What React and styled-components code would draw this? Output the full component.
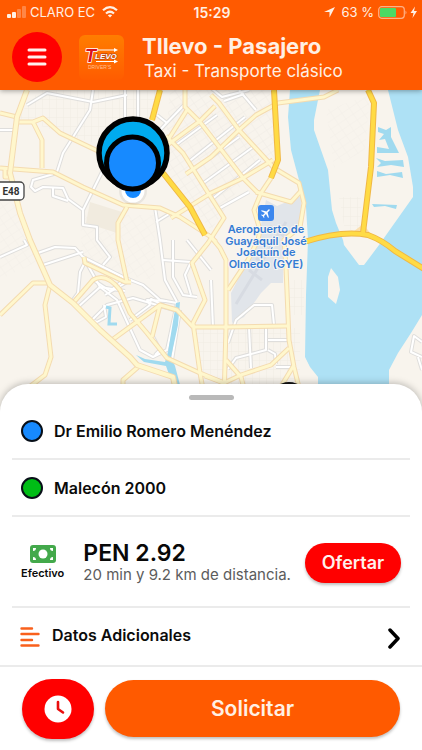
import React from 'react';
import styled, { createGlobalStyle } from 'styled-components';

const GlobalStyle = createGlobalStyle`
  * {
    box-sizing: border-box;
  }
  body {
    margin: 0;
    background: #fff;
    font-family: Inter, "Liberation Sans", sans-serif;
  }
  button {
    font-family: inherit;
    border: none;
    padding: 0;
    cursor: pointer;
  }
`;

const Page = styled.div`
  display: flex;
  flex-direction: column;
  min-height: 100vh;
`;
const Header = styled.header`
  position: relative;
  z-index: 1;
  height: 90px;
  background: #ff5a00;
  color: #fff0e4;
  box-shadow: 0 1px 5px rgba(0, 0, 0, 0.35);
`;
const StatusBar = styled.div`
  display: grid;
  grid-template-columns: 1fr auto 1fr;
  align-items: center;
  height: 24px;
  padding: 0 5px 0 7px;
  font-size: 13px;
`;
const StatusGroup = styled.div`
  display: flex;
  align-items: center;
  justify-content: ${props => (props.$end ? 'flex-end' : 'flex-start')};
  gap: 4px;
  white-space: nowrap;
`;
const Clock = styled.time`
  font-size: 14px;
  font-weight: 600;
`;
const TitleBar = styled.div`
  display: flex;
  align-items: center;
  height: 66px;
  padding: 0 12px;
`;
const MenuButton = styled.button`
  display: flex;
  align-items: center;
  justify-content: center;
  width: 50px;
  height: 50px;
  border-radius: 50%;
  background: #ff0000;
`;
const Logo = styled.svg`
  margin: 0 18px 0 17px;
`;
const Titles = styled.div`
  padding-top: 2px;
`;
const Title = styled.h1`
  margin: 0;
  font-size: 22px;
  line-height: 26px;
  font-weight: 700;
`;
const Subtitle = styled.p`
  margin: 0 0 0 2px;
  font-size: 17px;
  line-height: 24px;
`;
const MapArea = styled.main`
  position: relative;
  flex: 1;
  min-height: 240px;
  margin-bottom: -26px;
  background: #f8f4ed;
`;
const MapDrawing = styled.svg`
  position: absolute;
  width: 100%;
  height: 100%;
`;
const Sheet = styled.section`
  position: relative;
  background: #fff;
  border-radius: 28px 28px 0 0;
  box-shadow: 0 -1px 7px rgba(0, 0, 0, 0.25);
`;
const Handle = styled.div`
  width: 45px;
  height: 5px;
  margin: 0 auto;
  border-radius: 3px;
  background: #b9b9b9;
`;
const SheetTop = styled.div`
  height: 19px;
  padding-top: 11px;
`;
const Rows = styled.div`
  padding: 0 12px;
`;
const Row = styled.button`
  display: flex;
  align-items: center;
  width: 100%;
  height: 57px;
  padding: 0 9px;
  background: none;
  border-bottom: 2px solid #ebebeb;
  color: #0b0b0b;
  font-size: 16px;
  font-weight: 600;
  text-align: left;
`;
const Dot = styled.span`
  width: 22px;
  height: 22px;
  margin-right: 11px;
  border: 2px solid #080f18;
  border-radius: 50%;
  background: ${props => props.$color};
`;
const FareRow = styled.div`
  display: flex;
  align-items: center;
  height: 91px;
  padding: 2px 9px 0;
  border-bottom: 2px solid #ebebeb;
`;
const PaymentButton = styled.button`
  display: flex;
  flex-direction: column;
  align-items: center;
  gap: 3px;
  background: none;
  color: #0b0b0b;
  font-size: 11px;
  line-height: 14px;
  font-weight: 600;
`;
const Fare = styled.div`
  flex: 1;
  padding-left: 19px;
  white-space: nowrap;
`;
const Price = styled.div`
  font-size: 23px;
  line-height: 24px;
  font-weight: 600;
  color: #080808;
`;
const Distance = styled.div`
  font-size: 15px;
  line-height: 20px;
  color: #5c5c5c;
`;
const OfferButton = styled.button`
  width: 96px;
  height: 40px;
  border-radius: 20px;
  background: #ff0000;
  color: #fff0ec;
  font-size: 18px;
  font-weight: 600;
  box-shadow: 0 2px 3px rgba(0, 0, 0, 0.25);
`;
const ExtraRow = styled(Row)`
  border-bottom: none;
  padding: 0 8px;
`;
const RowLabel = styled.span`
  flex: 1;
  padding: 0 0 3px 12px;
`;
const Footer = styled.footer`
  position: relative;
  display: flex;
  align-items: center;
  gap: 11px;
  height: 85px;
  padding: 0 22px;
  border-top: 2px solid #ebebeb;
  background: #fff;
`;
const ScheduleButton = styled.button`
  display: flex;
  align-items: center;
  justify-content: center;
  width: 72px;
  height: 60px;
  border-radius: 30px;
  background: #ff0000;
  box-shadow: 0 2px 3px rgba(0, 0, 0, 0.25);
`;
const RequestButton = styled.button`
  flex: 1;
  height: 57px;
  border-radius: 29px;
  background: #ff5a00;
  color: #fff0e4;
  font-size: 21px;
  font-weight: 600;
  box-shadow: 0 2px 3px rgba(0, 0, 0, 0.25);
`;

const avenues = [
  'M27 0L17 27L10 83L20 123L30 150L50 195L73 213L100 240L130 267L137 275L173 287L178 310',
];
const roads = [
  'M0 23L17 27', 'M17 32H33L43 28L60 43L100 62', 'M33 32L42 50V78',
  'M0 78L53 82L83 97L123 115L160 118L180 127L211 147L216 152',
  'M127 117L118 133V150L127 192', 'M5 78L5 87H12',
  'M185 0V17L200 32L243 88L258 103', 'M166 46L183 63L200 90L224 128L208 153L192 173L205 210L193 233L200 283L205 310',
  'M187 20L168 50', 'M215 16L200 31L166 56', 'M211 5L219 13L239 40L274 78L299 93L304 113L300 137L284 150L286 177L289 250L294 277L302 310',
  'M239 40L256 25L278 13L324 7L338 0', 'M239 40L211 67L186 84', 'M171 128L211 103L243 88L273 70',
  'M271 88L261 103L254 120L260 140L258 150L248 170L228 200', 'M256 102L291 112L301 101',
  'M211 147L220 158L226 170V237L224 310', 'M193 237H226L287 236',
  'M224 293L241 285L271 275L289 258', 'M205 286L224 293', 'M226 270L241 287L247 310', 'M294 275L277 303',
  'M0 225L33 193H50', 'M50 195L45 215L51 267L45 285L28 298',
  'M73 213L93 190Q106 182 120 200L130 223L147 243L167 268L200 283L224 293',
  'M84 167L85 173L125 192H131', 'M112 250L160 215L152 247',
  'M160 215L177 220L193 237', 'M123 310V290L138 277',
];
const streets = [
  'M93 0L90 20L63 63L57 82', 'M27 15L47 3L93 12L127 5', 'M0 40H15', 'M125 0V30', 'M138 0V30',
  'M57 83L33 90L31 97L35 101L43 97L63 98L68 109L83 120V135L97 137V150L110 167L103 175',
  'M53 98V106L68 111', 'M103 80L83 120', 'M155 117L160 150L165 190L177 212',
  'M156 132L169 124', 'M184 15L160 40', 'M157 25L167 33', 'M176 55L217 25', 'M187 73L245 27',
  'M192 81L239 47', 'M202 94L253 57', 'M211 110L260 70', 'M220 118L249 102', 'M239 0L256 20', 'M211 -2L222 7L249 0', 'M224 11L244 4',
  'M38 163L55 157L75 158L83 167L123 187L143 195L160 210L177 213', 'M43 175L83 162', 'M0 167L27 155L24 150',
  'M85 172L80 182L78 203L73 210', 'M85 170L100 197L117 210L140 260L153 267L167 260L177 213',
  'M92 230L107 215L133 208L150 213L174 220', 'M78 217L100 197L125 201', 'M92 230L97 232L106 227L104 215', 'M105 205L127 192',
  'M92 189L110 201L124 190', 'M130 230L150 215L147 210L167 211', 'M150 213L151 209L165 216', 'M151 243L160 260L155 265',
  'M173 150V187L183 205L197 207', 'M163 170L191 172L185 185L191 205', 'M187 150L211 180', 'M180 220L172 270',
  'M228 253L236 230L254 215H272L274 235', 'M249 238L251 278', 'M266 238V260L236 268L228 279',
  'M268 250H288', 'M268 260L275 264L276 274', 'M276 277H294', 'M211 190L213 238',
  'M422 252L414 246L411 262L422 267', 'M418 267L422 280',
];
const highways = [
  'M160 0L152 30', 'M163 83L190 117L205 145', 'M274 0L278 70L271 88',
  'M368 0L374 13L371 77L363 143', 'M304 152Q342 140 368 145Q382 150 395 161L424 179',
];

function StreetLayer({ paths, color, casing, width, outline }) {
  return (
    <g fill="none" strokeLinejoin="round">
      {paths.map(d => <path key={'c' + d} d={d} stroke={casing} strokeWidth={outline} />)}
      {paths.map(d => <path key={d} d={d} stroke={color} strokeWidth={width} />)}
    </g>
  );
}

function CityMap() {
  return (
    <MapDrawing viewBox="0 0 422 320" preserveAspectRatio="xMidYMin slice" role="img" aria-label="Mapa de Guayaquil">
      <defs>
        <pattern id="blocks" width="9" height="7" patternUnits="userSpaceOnUse" patternTransform="rotate(-34)">
          <path d="M0 0H9M0 0V7" stroke="#f0ece5" fill="none" />
        </pattern>
        <pattern id="grid" width="7" height="9" patternUnits="userSpaceOnUse">
          <path d="M0 0H7M0 0V9" stroke="#f0ebe3" fill="none" />
        </pattern>
      </defs>
      <rect width="422" height="320" fill="#f8f4ed" />
      <path d="M40 0H160L152 40L120 60L60 43L17 27Z" fill="url(#grid)" />
      <path d="M170 0H270L276 70L243 92L211 140L163 80Z" fill="url(#blocks)" />
      <path d="M0 100L18 120L40 170L0 190ZM80 125H155V190L120 185L82 165Z" fill="url(#blocks)" opacity="0.6" />
      <path d="M226 238H300V300H226ZM195 238H224V290H203ZM290 190H304V225H290Z" fill="url(#grid)" />
      <path d="M90 112L122 122L117 143L86 133Z" fill="#f1ebdf" />
      <path d="M266 110L277 116L301 106L302 137L284 150L283 193H271L261 203L244 227L232 233L231 203L248 170L258 150Z" fill="#e1e5ea" />
      <path d="M236 214L286 132M249 180L262 190M256 168L269 178M270 136L284 146" fill="none" stroke="#d7dbe2" strokeWidth="3" />
      <path d="M290 0L288 27L291 60L299 90L306 117L308 150L306 205L305 267L310 277L318 287V320H389V280L398 263L411 243L422 225V0Z" fill="#aee1f5" />
      <path d="M320 0L314 30V40L321 60L328 80L332 120L336 133L343 150L344 155L359 175H364L379 155L384 148L413 107V97L408 67L398 40L388 0Z" fill="#f8f4ed" />
      <path d="M339 107H361V140H345Z" fill="url(#grid)" />
      <path d="M326 20L370 5L365 60L334 78Z" fill="url(#blocks)" opacity="0.6" />
      <path d="M331 178L338 187L340 200L336 214L328 207V187Z" fill="#f8f4ed" />
      <path d="M353 142L363 134L371 144Z" fill="#fbe0ae" />
      <StreetLayer paths={streets} color="#ffffff" casing="#dfdedc" width={2} outline={4} />
      <g fill="#a0daef">
        <path d="M378 37L386 40L391 37V47L399 63L377 63V57L389 59L385 49L379 50L384 44L378 42Z" />
        <path d="M376 68L385 71L403 70L404 77L391 75L377 77L381 73ZM377 81L386 84L402 82L403 88L390 85L377 87Z" />
        <path d="M372 114L397 115L396 119L385 116L374 117Z" />
        <path d="M136 265L145 269L165 272L168 262L176 213L180 212L178 235L171 267L175 276L184 310H178L166 276L144 272Z" />
      </g>
      <path d="M106 217L110 218L109 234L117 234" fill="none" stroke="#a0daef" strokeWidth="3" />
      <StreetLayer paths={roads} color="#fff7cd" casing="#f4dbb0" width={3} outline={5} />
      <StreetLayer paths={avenues} color="#fff7cd" casing="#f4dbb0" width={4} outline={6} />
      <StreetLayer paths={highways} color="#ffdb45" casing="#f0b845" width={4} outline={6} />

      <rect x="-4" y="92" width="28" height="18" rx="4" fill="#fff" stroke="#444" strokeWidth="1.3" />
      <text x="11" y="105" textAnchor="middle" fontFamily="Roboto, sans-serif" fontSize="10" fontWeight="700" fill="#333">E48</text>

      <rect x="258" y="115" width="16" height="16" rx="3" fill="#3c87ee" />
      <path transform="translate(260 117) rotate(45 6 6) scale(.5)" fill="#fff" d="M22 16v-2l-8.500-5V3.500a1.500 1.500 0 0 0-3 0V9L2 14v2l8.500-2.500V19L8 20.500V22l4-1 4 1v-1.500L13.500 19v-5.500Z" />
      <text textAnchor="middle" fontFamily="Inter, sans-serif" fontSize="11" fontWeight="600" fill="#347bd3" stroke="#f7f5f2" strokeWidth="2" paintOrder="stroke">
        <tspan x="266" y="143">Aeropuerto de</tspan>
        <tspan x="266" y="155">Guayaquil José</tspan>
        <tspan x="266" y="166">Joaquín de</tspan>
        <tspan x="266" y="178">Olmedo (GYE)</tspan>
      </text>

      <circle cx="133" cy="101" r="14" fill="#000" opacity="0.06" />
      <circle cx="133" cy="101" r="11.500" fill="#fff" />
      <circle cx="133" cy="100" r="8" fill="#178aff" />
      <circle cx="133" cy="63" r="34" fill="#00abef" stroke="#000" strokeWidth="5.500" />
      <circle cx="132.500" cy="73" r="26" fill="#178aff" stroke="#000" strokeWidth="5" />
      <circle cx="289" cy="311" r="19" fill="#111" />
    </MapDrawing>
  );
}

function SignalIcons() {
  return (
    <>
      <svg width="19" height="12" viewBox="0 0 19 12" fill="#fff0e4">
        <rect x="0" y="8" width="4" height="4" rx="1" />
        <rect x="5" y="6" width="4" height="6" rx="1" />
        <rect x="10" y="3" width="4" height="9" rx="1" opacity="0.3" />
        <rect x="15" y="0" width="4" height="12" rx="1" opacity="0.3" />
      </svg>
      <span>CLARO EC</span>
      <svg width="22" height="12" viewBox="0 0 22 12" fill="none" stroke="#fff0e4" strokeWidth="2.200">
        <path d="M4 4.300Q11-2 18 4.300M7 7.500Q11 4 15 7.500" />
        <path d="M11 11.500L8.800 9.300Q11 7.500 13.200 9.300Z" fill="#fff0e4" stroke="none" />
      </svg>
    </>
  );
}

function BatteryIcons() {
  return (
    <svg width="39" height="14" viewBox="0 0 39 14">
      <rect x="0.700" y="1.700" width="25.600" height="11.600" rx="3" fill="none" stroke="#ffb186" strokeWidth="1.200" />
      <rect x="2" y="3" width="16" height="9" rx="1" fill="#4cd964" />
      <path d="M27.500 5.500q2 2 0 4z" fill="#ffb186" />
      <path d="M37 1.500L32.500 8h3l-1 5L39 6h-3z" fill="#fff0e4" />
    </svg>
  );
}

function AppLogo() {
  return (
    <Logo width="45" height="45" viewBox="0 0 45 45" role="img" aria-label="Tllevo">
      <defs>
        <linearGradient id="logoBg" x1="0" y1="0" x2="0" y2="1">
          <stop offset="0" stopColor="#ff7d00" />
          <stop offset="1" stopColor="#ff5c00" />
        </linearGradient>
      </defs>
      <rect width="45" height="45" rx="6" fill="url(#logoBg)" />
      <path d="M14 15H36M17 26.500H37" stroke="#fff" strokeWidth="1.200" />
      <path d="M35 13L39 15L35 17ZM35 24.500L39 26.500L35 28.500Z" fill="#fff" />
      <g fontFamily="Liberation Sans, sans-serif" fontWeight="700" fontStyle="italic" paintOrder="stroke">
        <text x="6" y="27" fontSize="18" fill="#d9101e" stroke="#fff" strokeWidth="1.500">T</text>
        <text x="16" y="24" fontSize="8" fill="#fff" stroke="#b33a12" strokeWidth="1">LEVO</text>
      </g>
      <text x="9" y="34" fontFamily="Liberation Sans, sans-serif" fontSize="5" fill="#ffc193">DRIVER’S</text>
    </Logo>
  );
}

export default function App() {
  return (
    <Page>
      <GlobalStyle />
      <Header>
        <StatusBar>
          <StatusGroup>
            <SignalIcons />
          </StatusGroup>
          <Clock>15:29</Clock>
          <StatusGroup $end>
            <svg width="14" height="12" viewBox="0 0 14 12">
              <path d="M12 1L1 6h5.500v5.500z" fill="#fff0e4" />
            </svg>
            <span>63 %</span>
            <BatteryIcons />
          </StatusGroup>
        </StatusBar>
        <TitleBar>
          <MenuButton aria-label="Menú">
            <svg width="20" height="18" viewBox="0 0 20 18" stroke="#fff0ec" strokeWidth="3" strokeLinecap="round">
              <path d="M2 2H18M2 9H18M2 16H18" />
            </svg>
          </MenuButton>
          <AppLogo />
          <Titles>
            <Title>Tllevo - Pasajero</Title>
            <Subtitle>Taxi - Transporte clásico</Subtitle>
          </Titles>
        </TitleBar>
      </Header>

      <MapArea>
        <CityMap />
      </MapArea>

      <Sheet>
        <SheetTop>
          <Handle />
        </SheetTop>
        <Rows>
          <Row><Dot $color="#178aff" />Dr Emilio Romero Menéndez</Row>
          <Row><Dot $color="#00bd16" />Malecón 2000</Row>
          <FareRow>
            <PaymentButton>
              <svg width="26" height="18" viewBox="0 0 26 18">
                <rect width="26" height="18" rx="3" fill="#43a94b" />
                <circle cx="13" cy="9" r="4.500" fill="#fff" />
                <path d="M3 6V3H6Q6 6 3 6ZM23 6V3H20Q20 6 23 6ZM3 12V15H6Q6 12 3 12ZM23 12V15H20Q20 12 23 12Z" fill="#fff" />
              </svg>
              Efectivo
            </PaymentButton>
            <Fare>
              <Price>PEN 2.92</Price>
              <Distance>20 min y 9.2 km de distancia.</Distance>
            </Fare>
            <OfferButton>Ofertar</OfferButton>
          </FareRow>
          <ExtraRow>
            <svg width="20" height="20" viewBox="0 0 20 20" stroke="#f9601c" strokeWidth="2.400" strokeLinecap="round">
              <path d="M1.500 1.500H12M1.500 7H18.500M1.500 13H12M1.500 18.500H18.500" />
            </svg>
            <RowLabel>Datos Adicionales</RowLabel>
            <svg width="16" height="24" viewBox="0 0 16 24" fill="none" stroke="#000" strokeWidth="3.500" strokeLinecap="round" strokeLinejoin="round">
              <path d="M4 5L12 13.500L4 22" />
            </svg>
          </ExtraRow>
        </Rows>
      </Sheet>

      <Footer>
        <ScheduleButton aria-label="Programar viaje">
          <svg width="28" height="28" viewBox="0 0 28 28">
            <circle cx="14" cy="14" r="13.500" fill="#fff" />
            <path d="M14 7V14L19 17.500" fill="none" stroke="#e90d0d" strokeWidth="2.600" strokeLinecap="round" strokeLinejoin="round" />
          </svg>
        </ScheduleButton>
        <RequestButton>Solicitar</RequestButton>
      </Footer>
    </Page>
  );
}
